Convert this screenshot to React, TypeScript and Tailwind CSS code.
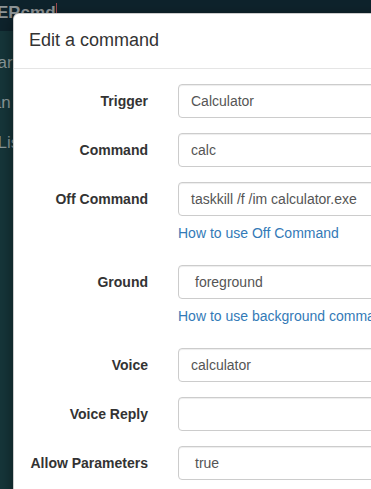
const rows = [
  { label: "Trigger", value: "Calculator" },
  { label: "Command", value: "calc" },
  {
    label: "Off Command",
    value: "taskkill /f /im calculator.exe",
    help: "How to use Off Command",
  },
  {
    label: "Ground",
    value: "foreground",
    select: true,
    help: "How to use background command",
  },
  { label: "Voice", value: "calculator" },
  { label: "Voice Reply", value: "" },
  { label: "Allow Parameters", value: "true", select: true },
];

const Field = ({
  label,
  value,
  select,
  help,
}: {
  label: string;
  value: string;
  select?: boolean;
  help?: string;
}) => {
  return (
    <div className="flex mb-[15px]">
      <div className="w-[149px] shrink-0 px-[15px] pt-[7px] text-right text-[14px] leading-[20px] font-bold text-[#333]">
        {label}
      </div>
      <div className="flex-1 px-[15px]">
        <div
          className={
            "h-[34px] border border-[#ccc] rounded-[4px] text-[14px] leading-[20px] text-[#555] py-[6px] whitespace-nowrap overflow-hidden shadow-[inset_0_1px_1px_rgba(0,0,0,0.075)] " +
            (select ? "pl-[16px]" : "pl-[12px]")
          }
        >
          {value}
        </div>
        {help && (
          <div className="mt-[7px] mb-[7px] text-[14px] leading-[20px] text-[#337ab7] whitespace-nowrap">
            {help}
          </div>
        )}
      </div>
    </div>
  );
};

const App = () => {
  return (
    <div
      className="relative h-[489px] w-[371px] overflow-hidden bg-[#16363a]"
      style={{ fontFamily: '"Liberation Sans", Arial, sans-serif' }}
    >
      <div className="h-[31px] bg-[#0e232c] overflow-hidden">
        <div className="-ml-[3px] pt-[2px] text-[17px] leading-[22px] font-bold text-[#8f9597] whitespace-nowrap">
          <span className="border-r border-[#a04a50]">ERcmd</span>
        </div>
      </div>
      <div className="-ml-[12px] pt-[23px] flex flex-col gap-[22px] text-[17px] leading-[18px] text-[#8c9a9b]">
        <div>bar</div>
        <div>ian</div>
        <div>_Lis</div>
      </div>

      <div className="absolute left-[13px] top-[13px] w-[600px] bg-white rounded-[6px] border border-[rgba(0,0,0,0.2)] shadow-[0_5px_15px_rgba(0,0,0,0.5)]">
        <div className="px-[15px] pt-[13px] pb-[15px] border-b border-[#e5e5e5]">
          <div className="text-[18px] leading-[26px] text-[#333]">
            Edit a command
          </div>
        </div>
        <div className="p-[15px]">
          <div className="-mx-[15px]">
            {rows.map((row) => (
              <Field
                key={row.label}
                label={row.label}
                value={row.value}
                select={row.select}
                help={row.help}
              />
            ))}
          </div>
        </div>
      </div>
    </div>
  );
};

export default App;
